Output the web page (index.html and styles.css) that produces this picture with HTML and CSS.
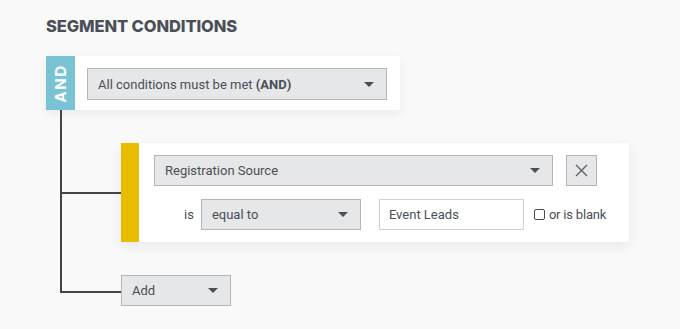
FILE: index.html
```html
<!DOCTYPE html>
<html>
<head>
<meta charset="utf-8">
<link rel="stylesheet" href="styles.css">
</head>
<body>
<div class="page">
  <h2 class="title">SEGMENT CONDITIONS</h2>
  <div class="group-card">
    <div class="group-tab"><span class="group-label">AND</span></div>
    <div class="group-body">
      <div class="select select-group">
        <span>All conditions must be met <b>(AND)</b></span>
        <span class="caret"></span>
      </div>
    </div>
  </div>
  <div class="children">
    <div class="cond-section">
      <div class="branch"></div>
      <div class="cond-card">
        <div class="cond-bar"></div>
        <div class="cond-body">
          <div class="cond-row">
            <div class="select select-field">
              <span>Registration Source</span>
              <span class="caret"></span>
            </div>
            <button class="remove" type="button" aria-label="Remove">
              <svg width="13" height="13" viewBox="0 0 13 13"><path d="M1 1L12 12M12 1L1 12" stroke="#5a5f66" stroke-width="1.3" fill="none"/></svg>
            </button>
          </div>
          <div class="cond-row row2">
            <span class="is">is</span>
            <div class="select select-op">
              <span>equal to</span>
              <span class="caret"></span>
            </div>
            <div class="input">Event Leads</div>
            <label class="blank"><span class="checkbox"></span>or is blank</label>
          </div>
        </div>
      </div>
    </div>
    <div class="add-row">
      <div class="elbow"></div>
      <div class="select select-add">
        <span>Add</span>
        <span class="caret"></span>
      </div>
    </div>
  </div>
</div>
</body>
</html>
```
FILE: styles.css
```css
* { box-sizing: border-box; }
html, body { margin: 0; padding: 0; }
body {
  background: #f9f9f9;
  font-family: "Roboto", "Liberation Sans", sans-serif;
  color: #4a4f56;
  width: 680px;
  height: 329px;
  overflow: hidden;
}
.page { padding: 17px 0 0 46px; }
.title {
  margin: 0 0 21px 0;
  font-family: "Inter", "Roboto", sans-serif;
  font-size: 16.5px;
  line-height: 18px;
  font-weight: 800;
  color: #4b5058;
  letter-spacing: -0.1px;
}
.group-card {
  display: flex;
  width: 354px;
  height: 54px;
  background: #fff;
  box-shadow: 0 4px 10px rgba(0,0,0,0.06);
}
.group-tab {
  width: 29px;
  background: #7ac3d5;
  display: flex;
  align-items: center;
  justify-content: center;
}
.group-label {
  transform: rotate(-90deg);
  color: #fff;
  font-family: "Inter", "Roboto", sans-serif;
  font-weight: 700;
  font-size: 15px;
  letter-spacing: 1.5px;
}
.group-body { padding: 12px; }
.select {
  display: flex;
  align-items: center;
  justify-content: space-between;
  background: #e6e7e9;
  border: 1px solid #b3b5b9;
  font-size: 13px;
  color: #4a4f56;
  padding: 0 12px 0 10px;
  height: 31px;
}
.select b { font-weight: 700; }
.caret {
  width: 0; height: 0;
  border-left: 5px solid transparent;
  border-right: 5px solid transparent;
  border-top: 5px solid #4a4f56;
}
.select-group { width: 300px; height: 32px; }
.children { margin-left: 14px; }
.cond-section {
  display: flex;
  align-items: center;
  border-left: 2px solid #454545;
  padding-top: 33px;
}
.branch { width: 59px; height: 2px; background: #454545; }
.cond-card {
  display: flex;
  width: 508px;
  height: 99px;
  background: #fff;
  box-shadow: 0 4px 12px rgba(0,0,0,0.07);
}
.cond-bar { width: 18px; background: #e8bd00; }
.cond-body { padding: 12px 0 0 15px; display: flex; flex-direction: column; gap: 13px; }
.cond-row { display: flex; align-items: center; }
.select-field { width: 399px; }
.remove {
  margin-left: 13px;
  width: 31px; height: 31px;
  background: #e6e7e9;
  border: 1px solid #b3b5b9;
  padding: 0;
  display: flex; align-items: center; justify-content: center;
}
.row2 { padding-left: 30px; }
.is { font-size: 13px; margin-right: 7px; }
.select-op { width: 160px; }
.input {
  margin-left: 18px;
  width: 145px; height: 31px;
  border: 1px solid #cfd1d4;
  background: #fff;
  font-size: 13px;
  display: flex; align-items: center;
  padding-left: 9px;
}
.blank { display: flex; align-items: center; margin-left: 10px; font-size: 13px; letter-spacing: -0.2px; }
.checkbox {
  width: 11px; height: 11px;
  border: 1.3px solid #4a4f56;
  border-radius: 2px;
  margin-right: 4px;
}
.add-row { display: flex; align-items: flex-start; }
.elbow {
  width: 61px; height: 51px;
  border-left: 2px solid #454545;
  border-bottom: 2px solid #454545;
}
.select-add { width: 110px; margin-top: 33px; }
```
